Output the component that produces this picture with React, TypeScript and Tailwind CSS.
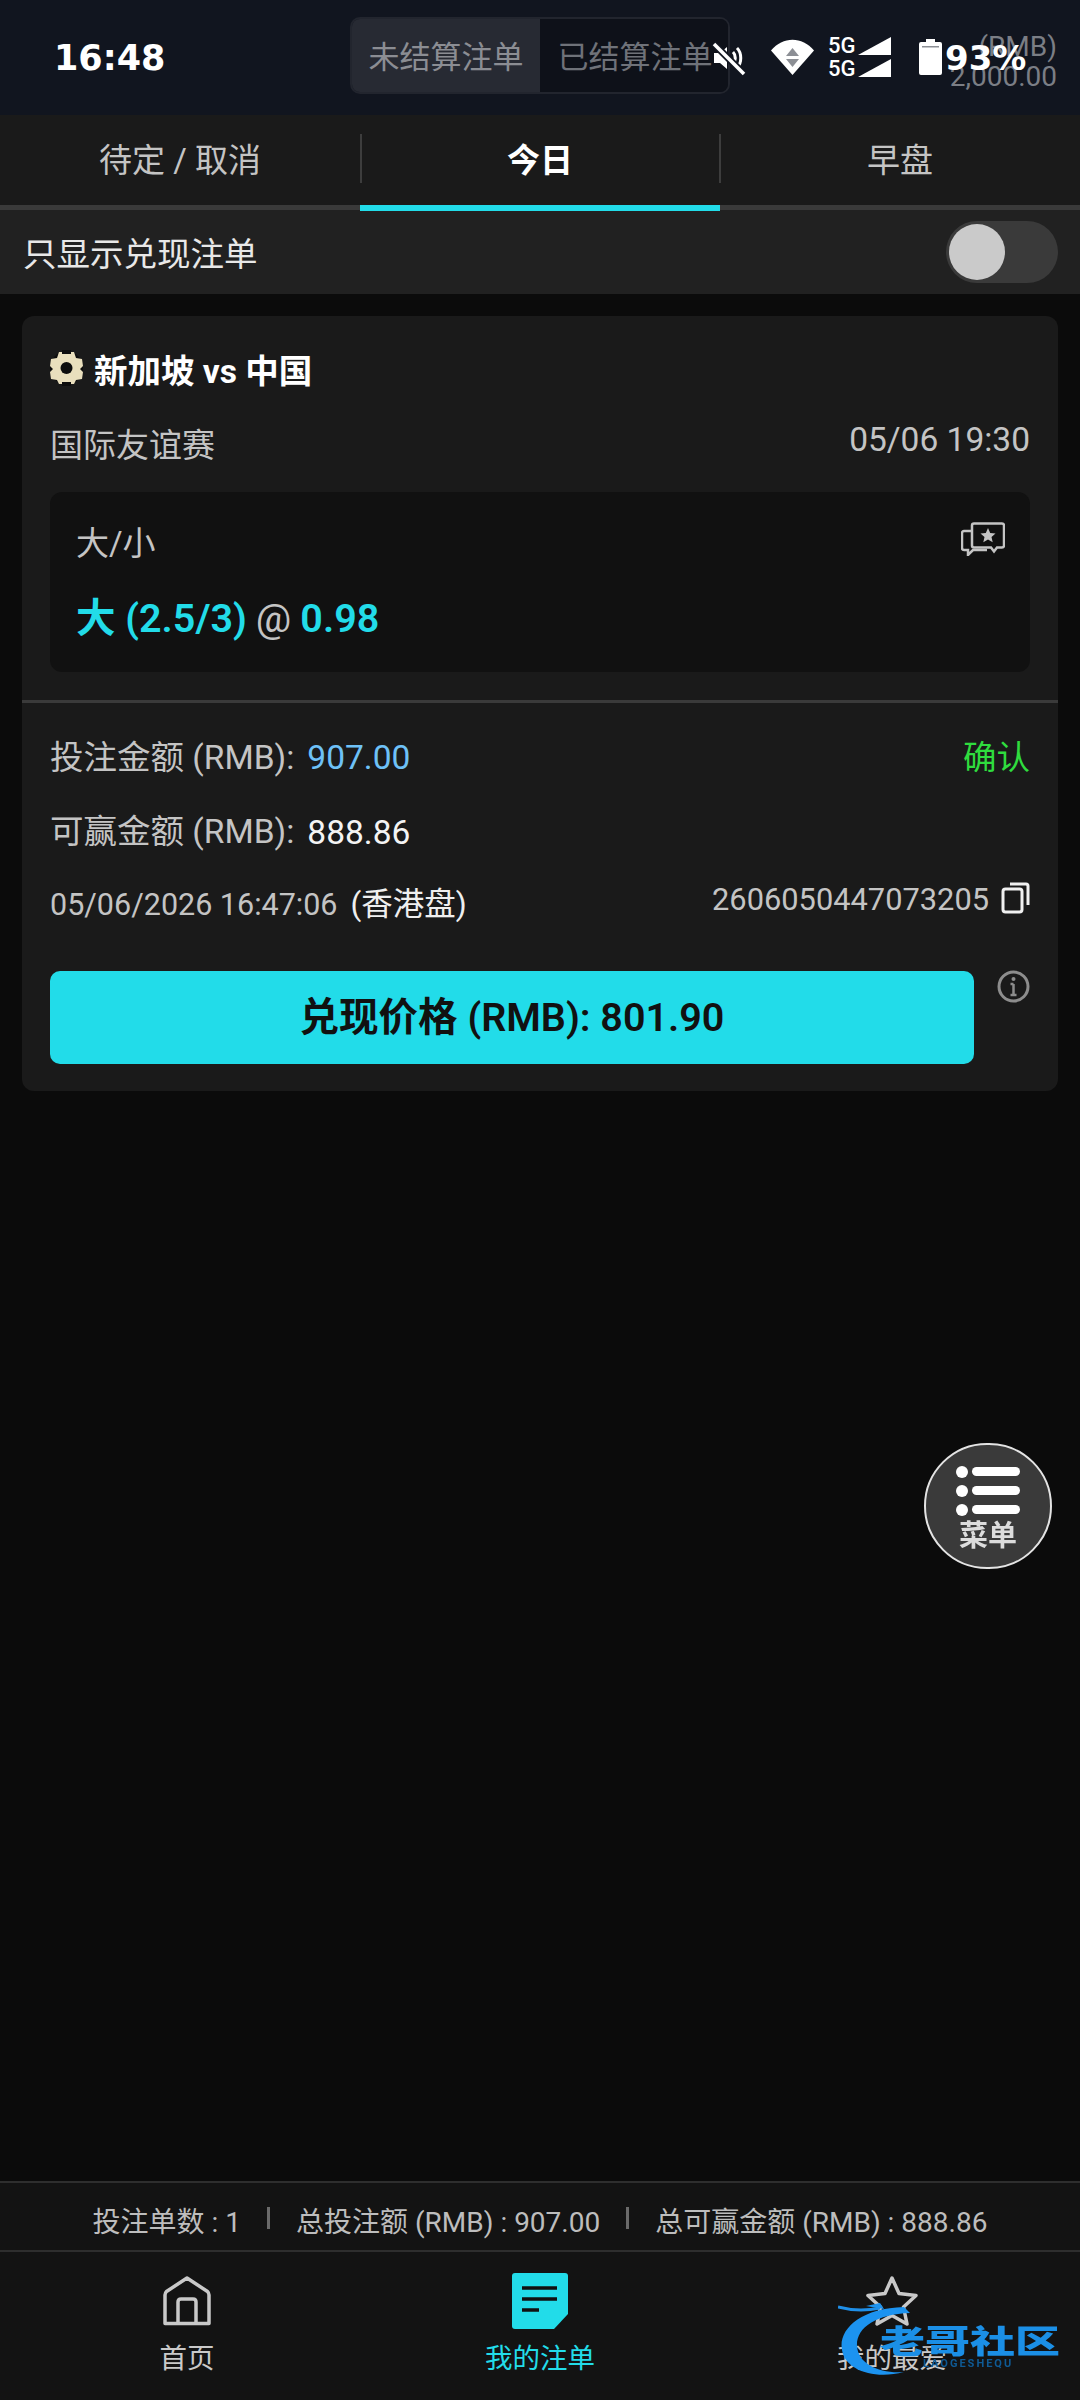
const cjk = "font-['Roboto','Noto_Sans_CJK_SC',sans-serif]";

function StatusBar() {
  return (
    <>
      <div className="absolute left-[54px] top-[36px] font-['DejaVu_Sans',sans-serif] text-[35px] leading-[44px] font-bold text-white">16:48</div>
      {/* mute */}
      <svg className="absolute left-[711px] top-[40px]" width="36" height="36" viewBox="0 0 36 36" fill="none">
        <path d="M3 13h6l7-6v22l-7-6H3z" fill="#fff" />
        <path d="M22 12c3 3 3 9 0 12M26 8c5 5 5 15 0 20" stroke="#fff" strokeWidth="3" />
        <path d="M2 3l32 32" stroke="#11151f" strokeWidth="7" />
        <path d="M3 4l30 30" stroke="#fff" strokeWidth="3.5" />
      </svg>
      {/* wifi */}
      <svg className="absolute left-[771px] top-[39px]" width="43" height="36" viewBox="0 0 43 36">
        <path d="M0 11.5C12-3 31-3 43 11.5L21.5 36z" fill="#fff" />
        <path d="M21.5 9l6.5 8H15z" fill="#8c8f95" />
        <path d="M15 20h13l-6.500 8z" fill="#8c8f95" />
      </svg>
      {/* 5G */}
      <div className="absolute left-[828px] top-[34px] font-['Roboto',sans-serif] text-[22px] leading-[24px] font-medium text-white">
        <div className="h-[23px]">5G</div>
        <div>5G</div>
      </div>
      <svg className="absolute left-[858px] top-[37px]" width="34" height="41" viewBox="0 0 34 41" fill="#fff">
        <path d="M33 0v18H0z" />
        <path d="M33 22v18H0z" />
      </svg>
      {/* battery */}
      <svg className="absolute left-[919px] top-[39px]" width="23" height="36" viewBox="0 0 23 36">
        <path d="M7 0h9v3h5a2 2 0 0 1 2 2v29a2 2 0 0 1-2 2H2a2 2 0 0 1-2-2V5a2 2 0 0 1 2-2h5z" fill="#fff" />
        <rect x="3" y="7" width="17" height="1.500" fill="#8c8f95" />
      </svg>
      <div className="absolute left-[945px] top-[36px] font-['DejaVu_Sans',sans-serif] text-[34px] leading-[44px] font-bold text-white">93%</div>
    </>
  );
}

function Header() {
  return (
    <div className="flex h-[115px] items-start justify-between bg-[#11151f] pt-[17px] pr-[23px] pl-[350px]">
      <div className={`flex h-[77px] w-[380px] overflow-hidden rounded-[10px] border-2 border-[#22252e] text-[31px] ${cjk}`}>
        <div className="flex w-[188px] items-center justify-center bg-[#272a33] pt-[5px] text-[#8b8d93]">未结算注单</div>
        <div className="flex flex-1 items-center justify-center bg-[#0e1119] pt-[5px] pl-[2px] text-[#6f7279]">已结算注单</div>
      </div>
      <div className="pt-[15px] text-right font-['Roboto',sans-serif] text-[28px] leading-[30px] text-[#7b7e85]">
        <div>(RMB)</div>
        <div>2,000.00</div>
      </div>
    </div>
  );
}

function Tabs() {
  return (
    <div className={`relative flex h-[95px] border-b-[5px] border-[#3a3a3a] bg-[#1a1a1a] text-[33px] ${cjk}`}>
      <div className="flex w-[360px] items-center justify-center pt-[1px] text-[#c4c4c4]">待定 / 取消</div>
      <div className="relative flex w-[360px] items-center justify-center pt-[1px] font-bold text-white">
        今日
        <span className="absolute top-[19px] left-0 h-[49px] w-[2px] bg-[#3d3d3d]" />
        <span className="absolute top-[19px] -right-[1px] h-[49px] w-[2px] bg-[#3d3d3d]" />
        <span className="absolute -bottom-[6px] left-0 h-[6px] w-[360px] bg-[#22dce9]" />
      </div>
      <div className="flex w-[360px] items-center justify-center pt-[1px] text-[#c4c4c4]">早盘</div>
    </div>
  );
}

function CashFilter() {
  return (
    <div className={`flex h-[84px] items-center justify-between bg-[#212121] pr-[22px] pl-[23px] text-[33.500px] text-[#e8e8e8] ${cjk}`}>
      <span className="translate-y-[3px]">只显示兑现注单</span>
      <div className="flex h-[62px] w-[112px] items-center rounded-full bg-[#3a3a3a] pl-[3px]">
        <div className="h-[56px] w-[56px] rounded-full bg-[#cacaca]" />
      </div>
    </div>
  );
}

function BetCard() {
  return (
    <div className={`mx-[22px] mt-[22px] rounded-[12px] bg-[#1a1a1a] ${cjk}`}>
      <div className="px-[28px] pt-[34px] pb-[28px]">
        <div className="flex h-[40px] items-center gap-[11px] text-[33.500px] font-bold text-white">
          <svg className="-translate-y-[2px]" width="33" height="36" viewBox="0 0 33 36">
            <circle cx="16.500" cy="18" r="16.500" fill="#0d0d0d" />
            <path d="M9 2h15l2 6 6 1 1 7-3 3 3 3-1 7-6 1-2 4H9l-2-4-6-1-1-7 3-3-3-3 1-7 6-1z" fill="#e9dfbd" />
            <circle cx="16.500" cy="18" r="6" fill="#0d0d0d" />
            <path d="M12 0h9v4h-9zM12 32h9v4h-9z" fill="#0d0d0d" />
          </svg>
          <span className="translate-y-[2px]">新加坡 vs 中国</span>
        </div>
        <div className="mt-[36px] flex h-[38px] items-center justify-between text-[33px] text-[#c4c4c4]">
          <span className="translate-y-[1px]">国际友谊赛</span>
          <span className="-translate-y-[5px] text-[33.500px]">05/06 19:30</span>
        </div>
        <div className="mt-[28px] h-[180px] rounded-[12px] bg-[#111111] px-[26px] pt-[32px]">
          <div className="flex items-start justify-between">
            <span className="text-[33px] leading-[40px] text-[#c4c4c4]">大/小</span>
            <svg className="-mt-[2px] mr-[-1px]" width="44" height="34" viewBox="0 0 44 34" fill="none" stroke="#c4c4c4" strokeWidth="2.500">
              <path d="M11 3.500a2 2 0 0 1 2-2h28a2 2 0 0 1 2 2v20a2 2 0 0 1-2 2h-5l-3 4-3-4H13a2 2 0 0 1-2-2z" />
              <path d="M11 9H3a2 2 0 0 0-2 2v15a2 2 0 0 0 2 2h4v5l5-5h14" />
              <path d="M27 6l2.200 5 5.300.5-4 3.500 1.200 5.300-4.700-2.800-4.700 2.800 1.200-5.300-4-3.500 5.300-.5z" fill="#c4c4c4" stroke="none" />
            </svg>
          </div>
          <div className="mt-[31px] flex items-center gap-[9px] text-[39.500px] leading-[48px] font-semibold text-[#22dce9]">
            <span>大 (2.5/3)</span>
            <span className="font-normal text-[#c4c4c4]">@</span>
            <span>0.98</span>
          </div>
        </div>
      </div>
      <div className="h-[3px] bg-[#3a3a3a]" />
      <div className="px-[28px] pt-[33px] pb-[27px] text-[#c4c4c4]">
        <div className="flex h-[42px] translate-y-[1px] items-center justify-between text-[33.500px]">
          <div className="flex gap-[13px]">
            <span>投注金额 (RMB):</span>
            <span className="text-[#6ec1f7]">907.00</span>
          </div>
          <span className="text-[#2fdc3e]">确认</span>
        </div>
        <div className="mt-[33px] flex h-[42px] items-center gap-[13px] text-[33.500px]">
          <span>可赢金额 (RMB):</span>
          <span className="translate-y-[1px] text-[#f4f4f4]">888.86</span>
        </div>
        <div className="mt-[29px] flex h-[42px] items-center justify-between">
          <div className="flex translate-y-[2px] items-center gap-[13px]">
            <span className="text-[30.500px]">05/06/2026 16:47:06</span>
            <span className="text-[31.500px] text-[#efefef]">(香港盘)</span>
          </div>
          <div className="flex -translate-y-[3px] items-center gap-[12px]">
            <span className="text-[30.800px]">2606050447073205</span>
            <svg className="-translate-y-[2px]" width="29" height="32" viewBox="0 0 29 32" fill="none" stroke="#f0f0f0" strokeWidth="3">
              <rect x="2" y="7" width="19" height="23" rx="2.500" />
              <path d="M9 2h16a2 2 0 0 1 2 2v19" />
            </svg>
          </div>
        </div>
        <div className="mt-[47px] flex items-start justify-between">
          <div className="flex h-[93px] w-[924px] items-center justify-center rounded-[10px] bg-[#22dce9] text-[39.500px] font-semibold text-[#111111]">
            兑现价格 (RMB): 801.90
          </div>
          <svg className="-mt-[1px]" width="33" height="33" viewBox="0 0 33 33" fill="none" stroke="#8d8d8d" strokeWidth="3">
            <circle cx="16.500" cy="16.500" r="14.500" />
            <path d="M16.500 14v11M13.500 14h3M13.500 25h6" strokeWidth="2.500" />
            <circle cx="16.500" cy="9" r="2" fill="#8d8d8d" stroke="none" />
          </svg>
        </div>
      </div>
    </div>
  );
}

function FloatingMenu() {
  return (
    <div className={`absolute top-[1443px] left-[924px] flex h-[126px] w-[128px] flex-col items-center rounded-full border-2 border-[#e4e4e4] bg-[#3a3a3a] pt-[20px] blur-[0.6px] ${cjk}`}>
      {[0, 1, 2].map((i) => (
        <div key={i} className="mb-[6px] flex h-[13px] items-center gap-[4px]">
          <span className="h-[12px] w-[12px] rounded-full bg-white" />
          <span className="h-[9px] w-[48px] rounded-full bg-white" />
        </div>
      ))}
      <span className="-mt-[3px] text-[29px] leading-[34px] font-bold text-[#dcdcdc]">菜单</span>
    </div>
  );
}

function Summary() {
  return (
    <div className={`flex h-[71px] items-center justify-center border-y-2 border-[#2e2e2e] bg-[#131313] pt-[13px] text-[28px] text-[#bdbdbd] ${cjk}`}>
      <span>投注单数 : 1</span>
      <span className="mx-[26px] h-[22px] w-[3px] -translate-y-[5px] bg-[#6a6a6a]" />
      <span>总投注额 (RMB) : 907.00</span>
      <span className="mx-[26px] h-[22px] w-[3px] -translate-y-[5px] bg-[#6a6a6a]" />
      <span>总可赢金额 (RMB) : 888.86</span>
    </div>
  );
}

function BottomNav() {
  return (
    <div className={`flex h-[148px] bg-[#131313] pt-[21px] text-[27.500px] text-[#c9c9c9] ${cjk}`}>
      <div className="flex w-[374px] flex-col items-center">
        <svg className="mt-[3px]" width="48" height="50" viewBox="0 0 48 50" fill="none" stroke="#c9c9c9" strokeWidth="3.500" strokeLinejoin="round">
          <path d="M2 47.500V19q0-2 1.500-3.500L24 2l20.500 13.500Q46 17 46 19v28.500z" />
          <path d="M15 47V26q0-3 3-3h12q3 0 3 3v21" />
        </svg>
        <span className="mt-[13px] leading-[40px]">首页</span>
      </div>
      <div className="flex w-[332px] flex-col items-center text-[#22dce9]">
        <svg width="56" height="56" viewBox="0 0 56 56">
          <path d="M3 0h50a3 3 0 0 1 3 3v38L42 56H3a3 3 0 0 1-3-3V3a3 3 0 0 1 3-3z" fill="#22dce9" />
          <path d="M10 15h35M10 26h35M10 37h17" stroke="#111" strokeWidth="3.500" />
        </svg>
        <span className="mt-[10px] leading-[40px]">我的注单</span>
      </div>
      <div className="flex w-[374px] flex-col items-center pr-[2px]">
        <svg className="mt-[3px]" width="52" height="50" viewBox="0 0 52 50" fill="none" stroke="#c9c9c9" strokeWidth="3.500" strokeLinejoin="round">
          <path d="M26 2l7 15.500 17 2-12.500 11.500 3.500 17-15-8.500-15 8.500 3.500-17L2 19.500l17-2z" />
        </svg>
        <span className="mt-[13px] leading-[40px]">我的最爱</span>
      </div>
    </div>
  );
}

function Watermark() {
  return (
    <div className="absolute top-[2300px] left-[838px] h-[84px] w-[230px] blur-[0.7px]">
      <svg className="absolute top-0 left-0" width="120" height="84" viewBox="0 0 120 84" fill="none">
        <path d="M0 7c15 4 28 4 42 1" stroke="#1f8fe8" strokeWidth="3" />
        <path d="M66 7C22 8 0 30 4 50c3 20 32 30 62 22C42 74 20 64 19 46 18 28 38 14 72 13z" fill="#1c93f0" />
        <path d="M28 6l14-3 4 6z" fill="#1c93f0" />
      </svg>
      <span className="absolute top-[13px] left-[42px] origin-center scale-y-[0.72] font-['Noto_Sans_CJK_SC',sans-serif] text-[45px] leading-[52px] font-black text-[#1b8fe6]">老哥社区</span>
      <span className="absolute top-[57px] left-[85px] font-['Roboto',sans-serif] text-[11px] leading-[14px] font-bold tracking-[2px] text-[#0f5a94]">LAOGESHEQU</span>
    </div>
  );
}

export default function App() {
  return (
    <div className="relative flex h-[2400px] w-[1080px] flex-col overflow-hidden bg-[#0b0b0b]">
      <Header />
      <Tabs />
      <CashFilter />
      <BetCard />
      <div className="flex-1" />
      <Summary />
      <BottomNav />
      <StatusBar />
      <FloatingMenu />
      <Watermark />
    </div>
  );
}
